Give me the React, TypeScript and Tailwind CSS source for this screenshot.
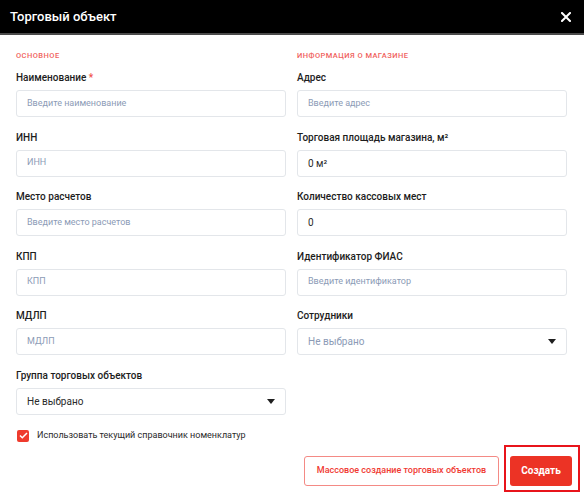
import React from 'react'

type Field = {
  label: string
  placeholder?: string
  value?: string
  required?: boolean
  select?: boolean
}

const leftFields: Field[] = [
  { label: 'Наименование', placeholder: 'Введите наименование', required: true },
  { label: 'ИНН', placeholder: 'ИНН' },
  { label: 'Место расчетов', placeholder: 'Введите место расчетов' },
  { label: 'КПП', placeholder: 'КПП' },
  { label: 'МДЛП', placeholder: 'МДЛП' },
  { label: 'Группа торговых объектов', value: 'Не выбрано', select: true },
]

const rightFields: Field[] = [
  { label: 'Адрес', placeholder: 'Введите адрес' },
  { label: 'Торговая площадь магазина, м²', value: '0 м²' },
  { label: 'Количество кассовых мест', value: '0' },
  { label: 'Идентификатор ФИАС', placeholder: 'Введите идентификатор' },
  { label: 'Сотрудники', placeholder: 'Не выбрано', select: true },
]

const Caret = () => (
  <svg width="8" height="5" viewBox="0 0 8 5" className="shrink-0">
    <path d="M0 0h8L4 5z" fill="#1f1f1f" />
  </svg>
)

const FormField: React.FC<{ field: Field }> = ({ field }) => (
  <div className="mb-[13.5px]">
    <div className="h-[14px] text-[10px] leading-[14px] font-medium text-[#1d1d1d]">
      {field.label}
      {field.required && <span className="text-[#f0504a]"> *</span>}
    </div>
    <div className="mt-[5px] h-[27px] rounded-[3px] border border-[#e3e6ea] bg-white px-[10px] flex items-center justify-between">
      {field.value ? (
        <span className="text-[10px] text-[#2a2a2a]">{field.value}</span>
      ) : field.select ? (
        <span className="text-[10px] text-[#8c9bb6]">{field.placeholder}</span>
      ) : (
        <span className="text-[9px] text-[#8c9bb6]">{field.placeholder}</span>
      )}
      {field.select && <Caret />}
    </div>
  </div>
)

const SectionTitle: React.FC<{ children: React.ReactNode }> = ({ children }) => (
  <div className="h-[12px] text-[7.5px] leading-[12px] tracking-[0.45px] font-medium uppercase text-[#f0625d] mb-[9px]">
    {children}
  </div>
)

export default function App() {
  return (
    <div className="w-[584px] h-[500px] bg-white overflow-hidden" style={{ fontFamily: 'Roboto, "Noto Sans", sans-serif' }}>
      {/* Header */}
      <div className="h-[35px] bg-black border-b-2 border-[#4a4a4a] flex items-center justify-between pl-[10px] pr-[13px]">
        <span className="text-white text-[13px] font-medium">Торговый объект</span>
        <svg width="10" height="10" viewBox="0 0 10 10">
          <path d="M1 1l8 8M9 1l-8 8" stroke="white" strokeWidth="2" strokeLinecap="square" />
        </svg>
      </div>

      {/* Body */}
      <div className="px-4 pt-[15px]">
        <div className="grid grid-cols-2 gap-x-[11px] pr-[1px]">
          <div>
            <SectionTitle>Основное</SectionTitle>
            {leftFields.map((f) => (
              <FormField key={f.label} field={f} />
            ))}
          </div>
          <div>
            <SectionTitle>Информация о магазине</SectionTitle>
            {rightFields.map((f) => (
              <FormField key={f.label} field={f} />
            ))}
          </div>
        </div>

        {/* Checkbox */}
        <label className="flex items-center gap-[8px] pl-[1px] mt-[1px]">
          <span className="w-[12px] h-[12px] rounded-[2px] bg-[#ef3b2d] flex items-center justify-center">
            <svg width="9" height="7" viewBox="0 0 9 7">
              <path d="M1 3.5l2.3 2.3L8 1" stroke="white" strokeWidth="1.5" fill="none" />
            </svg>
          </span>
          <span className="text-[9px] text-[#2a2a2a]">Использовать текущий справочник номенклатур</span>
        </label>

        {/* Footer */}
        <div className="flex justify-end items-end gap-[5px] mt-[2px] -mr-[12px]">
          <button className="h-[30px] w-[195px] mb-[6px] rounded-[3px] border border-[#f48a85] text-[#f03a33] text-[9px] font-medium bg-white">
            Массовое создание торговых объектов
          </button>
          <div className="border-2 border-[#e8141b] pt-[9px] pb-[4px] pl-[4px] pr-[6px]">
            <button className="h-[30px] w-[62px] rounded-[3px] bg-[#ec3325] text-white text-[10px] font-bold">
              Создать
            </button>
          </div>
        </div>
      </div>
    </div>
  )
}
